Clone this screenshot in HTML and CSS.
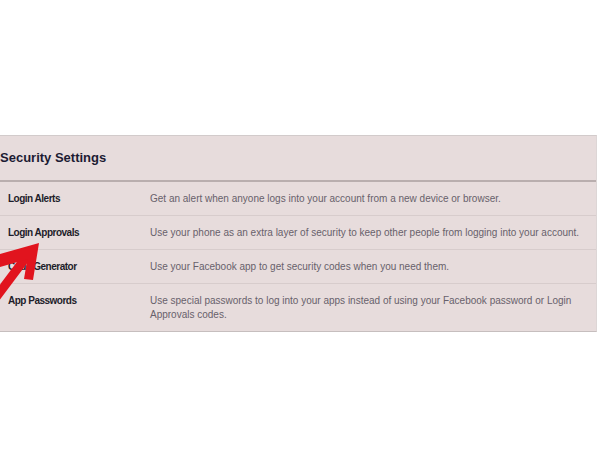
FILE: index.html
```html
<!DOCTYPE html>
<html>
<head>
<meta charset="utf-8">
<link rel="stylesheet" href="styles.css">
</head>
<body>
<div class="page">
  <section class="panel">
    <h2 class="panel-title">Security Settings</h2>
    <div class="row">
      <div class="label">Login Alerts</div>
      <div class="desc">Get an alert when anyone logs into your account from a new device or browser.</div>
    </div>
    <div class="row">
      <div class="label">Login Approvals</div>
      <div class="desc">Use your phone as an extra layer of security to keep other people from logging into your account.</div>
    </div>
    <div class="row">
      <div class="label">Code Generator</div>
      <div class="desc">Use your Facebook app to get security codes when you need them.</div>
    </div>
    <div class="row last">
      <div class="label">App Passwords</div>
      <div class="desc">Use special passwords to log into your apps instead of using your Facebook password or Login Approvals codes.</div>
    </div>
    <svg class="arrow" width="60" height="70" viewBox="0 0 60 70">
      <line x1="30" y1="16" x2="-6" y2="64" stroke="#e1141e" stroke-width="9"/>
      <polygon points="39,7 0,18 0,31 27.3,23.2 24,43 33,44" fill="#e1141e"/>
    </svg>
  </section>
</div>
</body>
</html>
```
FILE: styles.css
```css
html, body {
  margin: 0;
  padding: 0;
  background: #ffffff;
}
body {
  font-family: "Liberation Sans", Arial, sans-serif;
}
.page {
  padding-top: 135px;
}
.panel {
  position: relative;
  width: 596px;
  background: #e7dcdc;
  border-top: 1px solid #d2cbcb;
  border-right: 1px solid #ddd6d6;
  border-bottom: 1px solid #c6bebe;
}
.panel-title {
  margin: 0;
  height: 44px;
  line-height: 44px;
  padding-left: 0;
  font-size: 13px;
  font-weight: bold;
  color: #1c1b33;
  border-bottom: 2px solid #b9aeae;
}
.row {
  display: grid;
  grid-template-columns: 150px 1fr;
  padding: 10px 0 9px;
  border-bottom: 1px solid #d7cccc;
  font-size: 10px;
  line-height: 14px;
}
.row.last {
  border-bottom: none;
}
.label {
  padding-left: 8px;
  font-size: 10px;
  letter-spacing: -0.5px;
  font-weight: bold;
  color: #1e1d2a;
}
.desc {
  color: #67616b;
  padding-right: 8px;
}
.arrow {
  position: absolute;
  left: 0;
  top: 100px;
}
```
